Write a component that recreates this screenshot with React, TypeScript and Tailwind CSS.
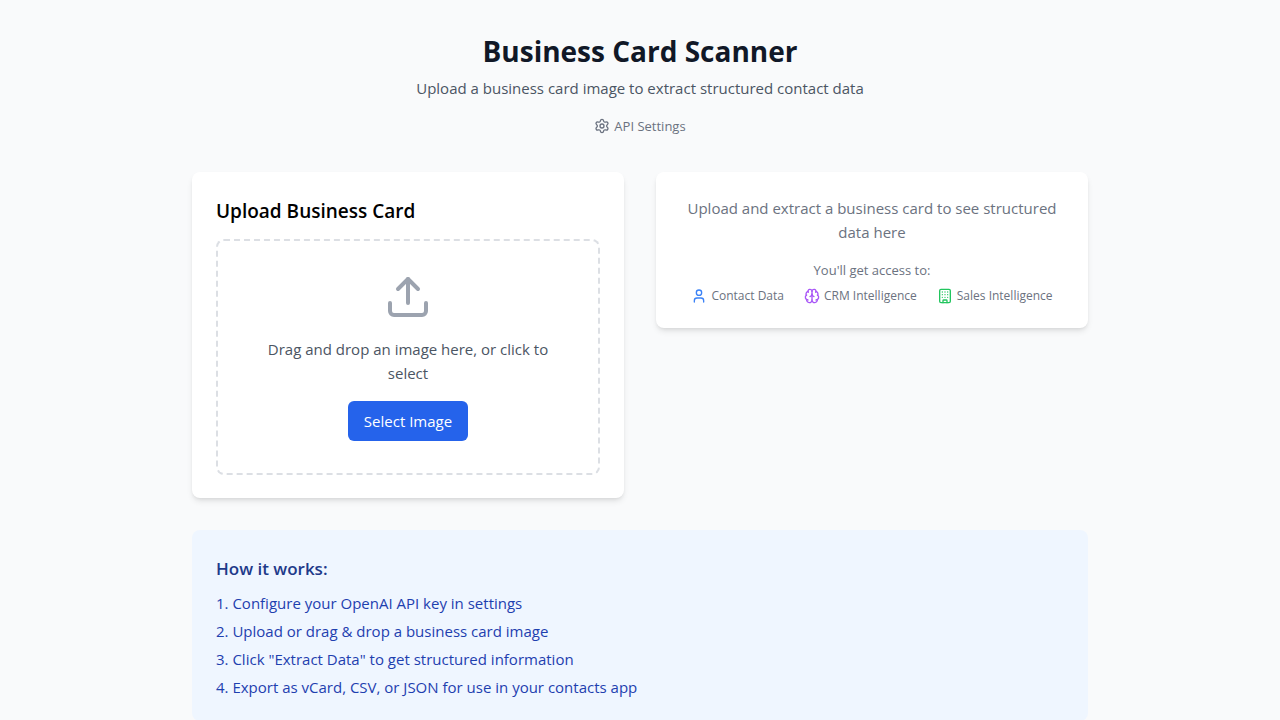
import { Brain, Building, Settings, Upload, User } from "lucide-react";

const steps = [
  "Configure your OpenAI API key in settings",
  "Upload or drag & drop a business card image",
  'Click "Extract Data" to get structured information',
  "Export as vCard, CSV, or JSON for use in your contacts app",
];

export default function App() {
  return (
    <main className="min-h-screen bg-[#f9fafb] px-4 py-8 font-['Open_Sans',sans-serif] text-[15px] leading-6">
      <div className="mx-auto max-w-4xl">
        <header className="mb-8 text-center">
          <h1 className="mb-1.5 text-[28px] leading-[38px] font-bold text-[#111827]">Business Card Scanner</h1>
          <p className="text-[#4b5563]">Upload a business card image to extract structured contact data</p>
          <button type="button" className="mt-4 inline-flex items-center gap-1 text-[13px] leading-5 text-[#6b7280]">
            <Settings className="size-4" />
            API Settings
          </button>
        </header>
        <div className="grid items-start gap-8 md:grid-cols-2">
          <section className="rounded-lg bg-white p-6 shadow-md">
            <h2 className="mb-3.5 text-[19px] leading-[30px] font-semibold text-black">Upload Business Card</h2>
            <div className="-my-px rounded-lg border-2 border-dashed border-[#dcdfe4] p-8 text-center">
              <Upload className="mx-auto mb-4 size-12 text-[#9ca3af]" />
              <p className="mb-4 text-[#4b5563]">Drag and drop an image here, or click to select</p>
              <button type="button" className="rounded-md bg-[#2563eb] px-4 py-2 text-white">Select Image</button>
            </div>
          </section>
          <section className="rounded-lg bg-white p-6 text-center text-[#6b7280] shadow-md">
            <p className="mb-4">Upload and extract a business card to see structured data here</p>
            <p className="mb-2 text-[13px] leading-5">You'll get access to:</p>
            <ul className="flex justify-center gap-5 text-xs">
              <li className="flex items-center gap-1"><User className="size-4 text-[#3b82f6]" />Contact Data</li>
              <li className="flex items-center gap-1"><Brain className="size-4 text-[#a855f7]" />CRM Intelligence</li>
              <li className="flex items-center gap-1"><Building className="size-4 text-[#22c55e]" />Sales Intelligence</li>
            </ul>
          </section>
        </div>
        <section className="mt-8 rounded-lg bg-[#eff6ff] px-6 pt-6 pb-[22px]">
          <h3 className="mb-[7px] text-[17px] leading-[30px] font-semibold text-[#1e3a8a]">How it works:</h3>
          <ol className="list-inside list-decimal space-y-1 text-[#1e40af]">
            {steps.map((step) => <li key={step}>{step}</li>)}
          </ol>
        </section>
      </div>
    </main>
  );
}
